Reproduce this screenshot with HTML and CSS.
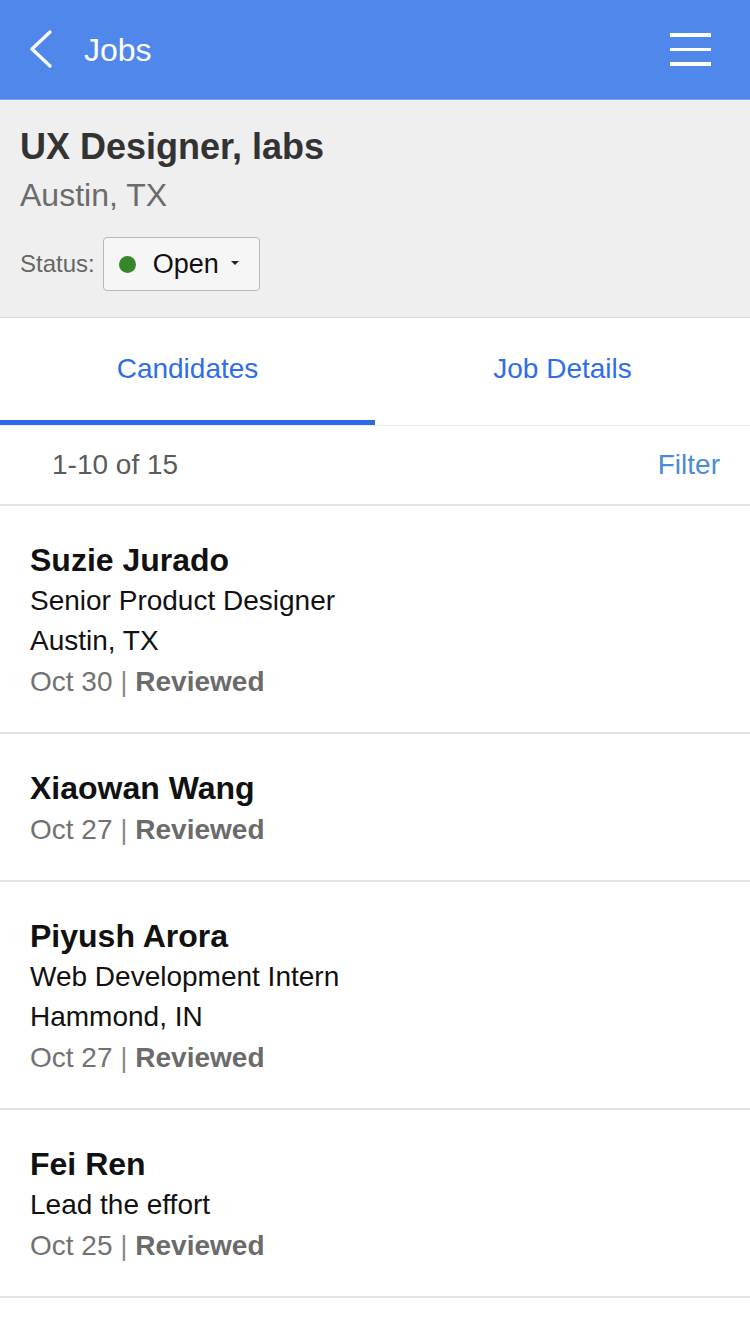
FILE: index.html
```html
<!DOCTYPE html>
<html lang="en">
<head>
<meta charset="utf-8">
<title>Jobs</title>
<link rel="stylesheet" href="styles.css">
</head>
<body>
<header class="topbar">
  <div class="topbar-left">
    <svg class="back-icon" width="24" height="40" viewBox="0 0 24 40" aria-hidden="true">
      <polyline points="20,3 2,20 20,37" fill="none" stroke="#ffffff" stroke-width="3.2" stroke-linecap="round" stroke-linejoin="round"/>
    </svg>
    <span class="topbar-title">Jobs</span>
  </div>
  <div class="menu-icon" aria-label="Menu">
    <span class="menu-line"></span>
    <span class="menu-line"></span>
    <span class="menu-line"></span>
  </div>
</header>

<section class="job-summary">
  <h1 class="job-title">UX Designer, labs</h1>
  <div class="job-location">Austin, TX</div>
  <div class="status-row">
    <span class="status-label">Status:</span>
    <div class="status-select">
      <span class="status-dot"></span>
      <span class="status-text">Open</span>
      <span class="caret"></span>
    </div>
  </div>
</section>

<nav class="tabs">
  <div class="tab tab-active">Candidates</div>
  <div class="tab">Job Details</div>
</nav>

<div class="list-toolbar">
  <span class="count">1-10 of 15</span>
  <span class="filter">Filter</span>
</div>

<ul class="candidates">
  <li class="candidate">
    <div class="cand-name">Suzie Jurado</div>
    <div class="cand-line">Senior Product Designer</div>
    <div class="cand-line">Austin, TX</div>
    <div class="cand-meta">Oct 30 <span class="sep">|</span> <b>Reviewed</b></div>
  </li>
  <li class="candidate">
    <div class="cand-name">Xiaowan Wang</div>
    <div class="cand-meta">Oct 27 <span class="sep">|</span> <b>Reviewed</b></div>
  </li>
  <li class="candidate">
    <div class="cand-name">Piyush Arora</div>
    <div class="cand-line">Web Development Intern</div>
    <div class="cand-line">Hammond, IN</div>
    <div class="cand-meta">Oct 27 <span class="sep">|</span> <b>Reviewed</b></div>
  </li>
  <li class="candidate">
    <div class="cand-name">Fei Ren</div>
    <div class="cand-line">Lead the effort</div>
    <div class="cand-meta">Oct 25 <span class="sep">|</span> <b>Reviewed</b></div>
  </li>
</ul>
</body>
</html>
```

FILE: styles.css
```css
* {
  box-sizing: border-box;
}

html, body {
  margin: 0;
  padding: 0;
  background: #ffffff;
}

body {
  font-family: "Liberation Sans", Arial, Helvetica, sans-serif;
  color: #111111;
  width: 750px;
}

/* Top bar */
.topbar {
  height: 100px;
  background: #4f87eb;
  border-bottom: 1px solid #7ea5f0;
  display: flex;
  align-items: center;
  justify-content: space-between;
  padding: 0 39px 0 30px;
}

.topbar-left {
  display: flex;
  align-items: center;
}

.back-icon {
  display: block;
  margin-top: -2px;
}

.topbar-title {
  color: #ffffff;
  font-size: 32px;
  line-height: 40px;
  margin-left: 30px;
}

.menu-icon {
  width: 41px;
  display: flex;
  flex-direction: column;
  gap: 11px;
  margin-top: 0;
}

.menu-line {
  display: block;
  height: 3.5px;
  background: #ffffff;
}

/* Job summary */
.job-summary {
  background: #efefef;
  border-bottom: 1px solid #d9d9d9;
  padding: 25px 20px 26px;
}

.job-title {
  margin: 0;
  font-size: 36px;
  line-height: 44px;
  font-weight: bold;
  color: #333333;
}

.job-location {
  margin-top: 6px;
  font-size: 32px;
  line-height: 40px;
  color: #6b6b6b;
}

.status-row {
  margin-top: 22px;
  display: flex;
  align-items: center;
}

.status-label {
  font-size: 24px;
  color: #666666;
  margin-right: 8px;
}

.status-select {
  width: 157px;
  height: 54px;
  border: 1px solid #b9b9b9;
  border-radius: 4px;
  background: #f6f6f6;
  display: flex;
  align-items: center;
  padding-left: 15px;
}

.status-dot {
  width: 17px;
  height: 17px;
  border-radius: 50%;
  background: #38862b;
  flex: none;
}

.status-text {
  font-size: 27px;
  color: #111111;
  margin-left: 17px;
}

.caret {
  width: 0;
  height: 0;
  border-left: 4px solid transparent;
  border-right: 4px solid transparent;
  border-top: 4px solid #222222;
  margin-left: 12px;
  margin-top: -2px;
}

/* Tabs */
.tabs {
  display: flex;
  height: 108px;
  border-bottom: 1px solid #eeeeee;
}

.tab {
  flex: 1;
  display: flex;
  align-items: center;
  justify-content: center;
  padding-bottom: 5px;
  font-size: 28px;
  color: #306ee8;
}

.tab-active {
  box-shadow: inset 0 -5px 0 #2e68ea;
}

/* Toolbar */
.list-toolbar {
  height: 80px;
  border-bottom: 2px solid #e4e4e4;
  display: flex;
  align-items: center;
  justify-content: space-between;
  padding: 0 30px 0 52px;
  font-size: 28px;
}

.count {
  color: #5b5b5b;
}

.filter {
  color: #4a8ad6;
}

/* Candidates */
.candidates {
  list-style: none;
  margin: 0;
  padding: 0;
}

.candidate {
  padding: 33px 30px 30px;
  border-bottom: 2px solid #e4e4e4;
}

.cand-name {
  font-size: 32px;
  line-height: 42px;
  font-weight: bold;
  color: #111111;
}

.cand-line {
  font-size: 28px;
  line-height: 40px;
  color: #111111;
}

.cand-meta {
  margin-top: 1px;
  font-size: 28px;
  line-height: 40px;
  color: #727272;
}

.cand-meta b {
  color: #6b6b6b;
}

.sep {
  color: #8a8a8a;
}
```
